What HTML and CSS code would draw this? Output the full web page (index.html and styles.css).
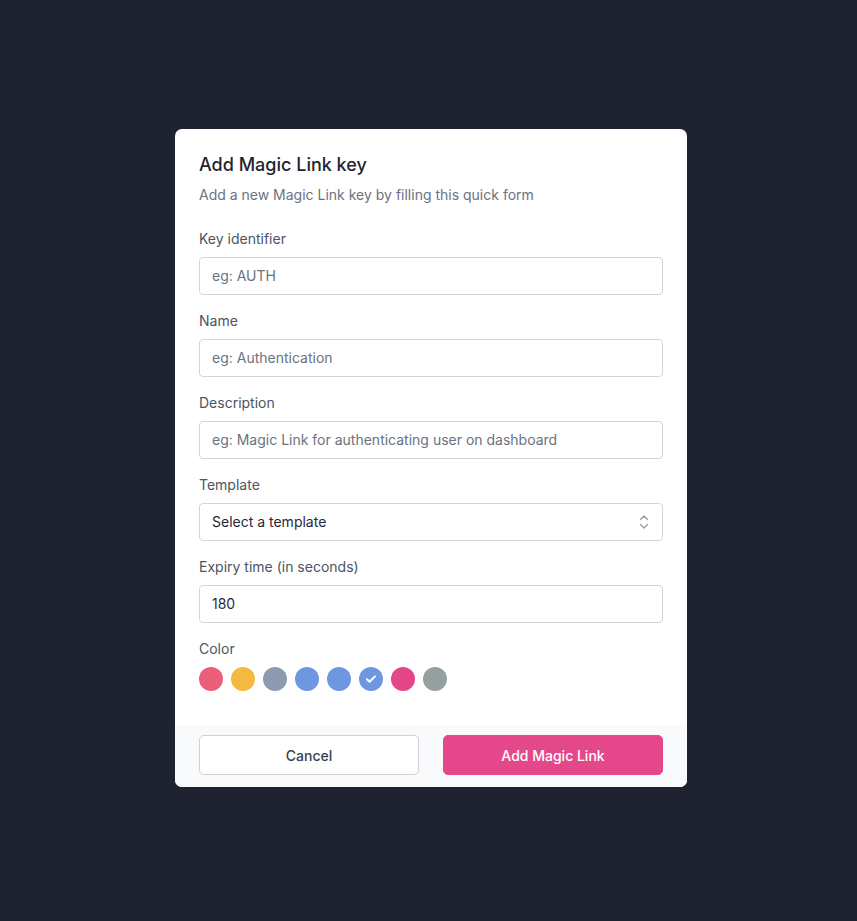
FILE: index.html
```html
<!DOCTYPE html>
<html lang="en">
<head>
<meta charset="utf-8">
<title>Add Magic Link key</title>
<link rel="stylesheet" href="styles.css">
</head>
<body>
<div class="backdrop">
  <div class="modal">
    <div class="modal-body">
      <h2 class="title">Add Magic Link key</h2>
      <p class="subtitle">Add a new Magic Link key by filling this quick form</p>
      <div class="form">
        <div class="field">
          <label class="label">Key identifier</label>
          <input class="input" type="text" placeholder="eg: AUTH">
        </div>
        <div class="field">
          <label class="label">Name</label>
          <input class="input" type="text" placeholder="eg: Authentication">
        </div>
        <div class="field">
          <label class="label">Description</label>
          <input class="input" type="text" placeholder="eg: Magic Link for authenticating user on dashboard">
        </div>
        <div class="field">
          <label class="label">Template</label>
          <div class="select">
            <span class="select-text">Select a template</span>
            <svg class="select-icon" width="14" height="20" viewBox="0 0 14 20" fill="none" stroke="#9ca3af" stroke-width="1.5" stroke-linecap="round" stroke-linejoin="round"><path d="M3.5 7.5 7 4l3.5 3.5"/><path d="M3.5 12.5 7 16l3.5-3.5"/></svg>
          </div>
        </div>
        <div class="field">
          <label class="label">Expiry time (in seconds)</label>
          <input class="input input-value" type="text" value="180">
        </div>
        <div class="field">
          <label class="label">Color</label>
          <div class="swatches">
            <span class="swatch c-coral"></span>
            <span class="swatch c-yellow"></span>
            <span class="swatch c-slate"></span>
            <span class="swatch c-blue"></span>
            <span class="swatch c-blue"></span>
            <span class="swatch c-blue selected"><svg width="14" height="14" viewBox="0 0 14 14" fill="none" stroke="#fff" stroke-width="2" stroke-linecap="round" stroke-linejoin="round"><path d="M3 7.2l2.6 2.6L11 4.4"/></svg></span>
            <span class="swatch c-pink"></span>
            <span class="swatch c-gray"></span>
          </div>
        </div>
      </div>
    </div>
    <div class="modal-footer">
      <button class="btn btn-cancel">Cancel</button>
      <button class="btn btn-primary">Add Magic Link</button>
    </div>
  </div>
</div>
</body>
</html>
```
FILE: styles.css
```css
* { box-sizing: border-box; }
html, body { margin: 0; padding: 0; }
body {
  background: #1f2330;
  font-family: Inter, "Noto Sans", sans-serif;
  color: #1f2937;
}
.backdrop {
  min-height: 921px;
  padding: 129px 0 0 5px;
  display: flex;
  justify-content: center;
  align-items: flex-start;
}
.modal {
  width: 512px;
  background: #fff;
  border-radius: 7px;
  overflow: hidden;
}
.modal-body {
  padding: 24px 24px 34px;
}
.title {
  margin: 0;
  font-size: 18px;
  line-height: 24px;
  font-weight: 500;
  color: #1f2430;
}
.subtitle {
  margin: 8px 0 0;
  font-size: 14px;
  line-height: 20px;
  color: #6b7280;
}
.form {
  margin-top: 24px;
  display: flex;
  flex-direction: column;
  gap: 16px;
}
.field {
  display: flex;
  flex-direction: column;
  gap: 8px;
}
.label {
  font-size: 14px;
  line-height: 20px;
  color: #4b5563;
}
.input {
  height: 38px;
  width: 100%;
  border: 1px solid #d1d5db;
  border-radius: 4px;
  padding: 0 12px 1px;
  font-family: inherit;
  font-size: 14px;
  color: #1f2937;
  outline: none;
  background: #fff;
}
.input::placeholder { color: #6b7280; }
.select {
  height: 38px;
  border: 1px solid #d1d5db;
  border-radius: 4px;
  padding: 0 12px 1px;
  display: flex;
  align-items: center;
  justify-content: space-between;
  font-size: 14px;
  color: #1f2937;
}
.select-icon { margin-right: -1px; }
.swatches {
  display: flex;
  gap: 8px;
}
.swatch {
  width: 24px;
  height: 24px;
  border-radius: 50%;
  display: flex;
  align-items: center;
  justify-content: center;
}
.c-coral { background: #ec5e7a; }
.c-yellow { background: #f5b942; }
.c-slate { background: #8c9bb0; }
.c-blue { background: #6d97e0; }
.c-pink { background: #e5468a; }
.c-gray { background: #95a0a1; }
.modal-footer {
  background: #f9fafb;
  padding: 10px 24px 12px;
  display: flex;
  gap: 24px;
}
.btn {
  flex: 1;
  height: 40px;
  border-radius: 5px;
  font-family: inherit;
  font-size: 14px;
  font-weight: 500;
  cursor: pointer;
}
.btn-cancel {
  background: #fff;
  border: 1px solid #cfd1d4;
  color: #374151;
}
.btn-primary {
  background: #e5488a;
  border: 1px solid #e5488a;
  color: #fff;
}
```
